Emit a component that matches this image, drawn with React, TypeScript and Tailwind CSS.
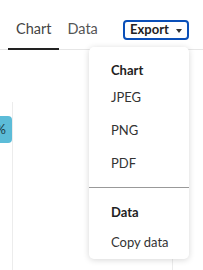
import React from 'react';

const chartFormats = ['JPEG', 'PNG', 'PDF'];

export default function App() {
  return (
    <div
      className="relative w-[203px] h-[270px] overflow-hidden bg-white text-[#333]"
      style={{ fontFamily: 'Lato, "Noto Sans", sans-serif' }}
    >
      {/* Header with tabs and export button */}
      <div className="flex items-end h-[50px] border-b border-[#e6e6e6]">
        <div className="flex pl-2">
          <button className="px-2 pb-[10px] text-[14.5px] leading-[18px] text-[#444] border-b-2 border-[#222] -mb-px">
            Chart
          </button>
          <button className="px-2 pb-[10px] text-[14.5px] leading-[18px] text-[#555] border-b-2 border-transparent -mb-px">
            Data
          </button>
        </div>
        <div className="flex-1" />
        <button className="self-start mt-5 mr-[14px] flex items-center justify-center gap-[7px] w-[66px] h-5 rounded-[4px] border-2 border-[#0a4fb8] text-[13px] font-bold text-[#222]">
          Export
          <svg width="6" height="4" viewBox="0 0 6 4" className="mt-px">
            <path d="M0 0h6L3 4z" fill="#333" />
          </svg>
        </button>
      </div>

      {/* Chart body */}
      <div className="flex h-[220px]">
        <div className="relative w-[13px] border-r border-[#ececec] mt-[52px]">
          <div className="absolute left-0 top-[14px] w-3 h-[27px] rounded-r-[4px] bg-[#5cbcd8] flex items-center justify-end pr-[6px] text-[13px] text-[#1d3a44] overflow-hidden">
            <span className="shrink-0">%</span>
          </div>
        </div>
        <div className="flex-1" />
        <div className="w-[31px] border-l border-[#ececec]" />
      </div>

      {/* Export dropdown menu */}
      <div className="absolute left-[89px] top-[47px] w-[100px] h-[212px] rounded-[5px] bg-white shadow-[0_1px_6px_rgba(0,0,0,0.16)] pt-[14px]">
        <div className="pl-[22px] h-5 flex items-center text-[13px] font-bold text-[#222]">Chart</div>
        {chartFormats.map((item) => (
          <div key={item} className="pl-[22px] h-[33px] flex items-center text-[13px] text-[#333]">
            {item}
          </div>
        ))}
        <div className="mt-[7px] border-t border-[#999]" />
        <div className="pt-[15px] pl-[22px] h-[35px] flex items-center text-[13px] font-bold text-[#222]">Data</div>
        <div className="mt-[10px] pl-[22px] h-5 flex items-center text-[13px] text-[#333]">Copy data</div>
      </div>
    </div>
  );
}
